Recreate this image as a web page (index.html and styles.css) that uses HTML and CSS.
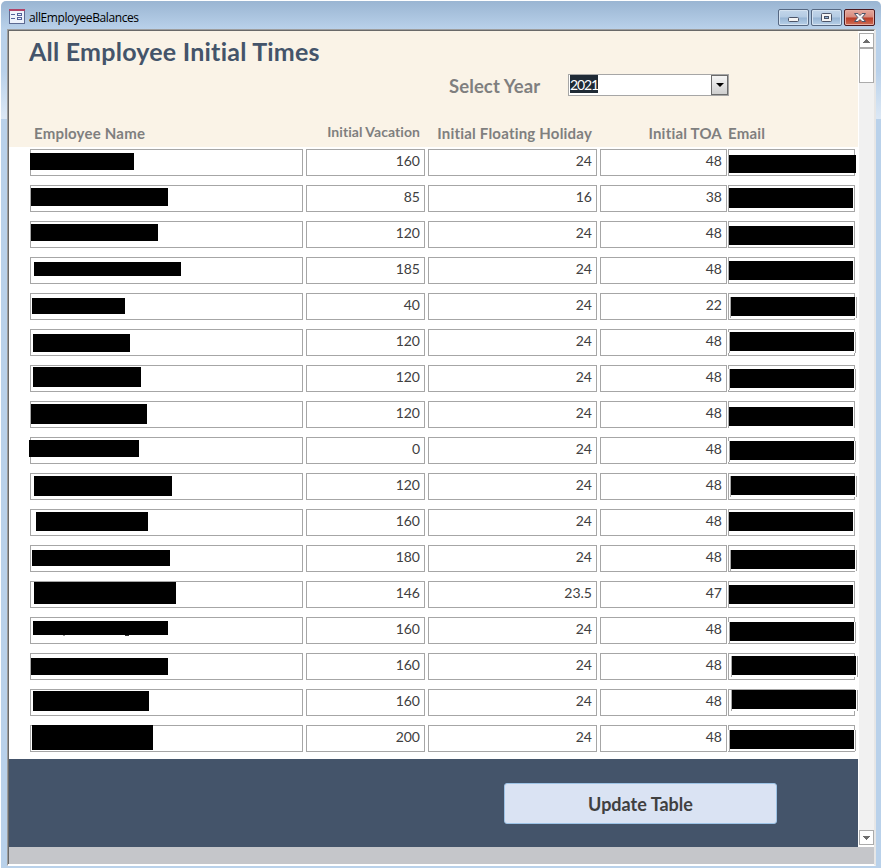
FILE: index.html
```
<!DOCTYPE html>
<html lang="en">
<head>
<meta charset="utf-8">
<title>allEmployeeBalances</title>
<link rel="stylesheet" href="styles.css">
</head>
<body>
<div class="window">
  <header class="titlebar">
    <svg class="app-icon" width="16" height="15" viewBox="0 0 16 15" shape-rendering="crispEdges">
      <rect width="16" height="15" fill="#5c6a92"/><rect x="1" y="2" width="14" height="12" fill="#eef3fc"/>
      <rect width="16" height="2" fill="#b04468"/>
      <path d="M2 5.500h4M2 9.500h4M8.500 4.500h4v2h-4zM8.500 8.500h4v2h-4z" fill="none" stroke="#53639b"/>
    </svg>
    <span class="window-name">allEmployeeBalances</span>
    <div class="controls">
      <button class="control" aria-label="Minimize"><svg width="29" height="15" viewBox="0 0 29 15"><rect x="9.5" y="7.5" width="10" height="4" rx="1" fill="#f4f4f4" stroke="#4c5468"/></svg></button>
      <button class="control" aria-label="Maximize"><svg width="29" height="15" viewBox="0 0 29 15"><rect x="9.5" y="3.5" width="10" height="8" rx="1" fill="#f4f4f4" stroke="#4c5468"/><rect x="12.5" y="6.5" width="4" height="2" fill="#8fb2d3" stroke="#4c5468"/></svg></button>
      <button class="control close" aria-label="Close"><svg width="29" height="15" viewBox="0 0 29 15"><path d="M9.500 3.500h3.500l2 2 2-2h3.500l-3.300 4 3.300 4h-3.500l-2-2-2 2h-3.500l3.300-4z" fill="#f4f4f4" stroke="#4c5468"/></svg></button>
    </div>
  </header>
  <div class="frame">
    <div class="work">
      <main class="form">
        <section class="form-header">
          <h1>All Employee Initial Times</h1>
          <div class="filter"><label>Select Year</label><div class="combo"><span class="selected">2021</span><span class="drop"></span></div></div>
          <div class="grid heads"><span class="h-name">Employee Name</span><span class="h-vac">Initial Vacation</span><span class="h-float">Initial Floating Holiday</span><span class="h-toa">Initial TOA</span><span class="h-email">Email</span></div>
        </section>
        <section class="rows">
          <div class="grid row"><div class="cell"><i class="mask" style="--x:0px;--y:4px;--w:104px;--h:17px"></i></div><div class="cell">160</div><div class="cell">24</div><div class="cell">48</div><div class="cell"><i class="mask" style="--x:1px;--y:6px;--w:127px;--h:18px"></i></div></div>
          <div class="grid row"><div class="cell"><i class="mask" style="--x:1px;--y:3px;--w:137px;--h:18px"></i></div><div class="cell">85</div><div class="cell">16</div><div class="cell">38</div><div class="cell"><i class="mask" style="--x:1px;--y:3px;--w:124px;--h:20px"></i></div></div>
          <div class="grid row"><div class="cell"><i class="mask" style="--x:1px;--y:3px;--w:127px;--h:17px"></i></div><div class="cell">120</div><div class="cell">24</div><div class="cell">48</div><div class="cell"><i class="patch" style="--x:0px;--y:5px"></i></div></div>
          <div class="grid row"><div class="cell"><i class="mask" style="--x:4px;--y:5px;--w:147px;--h:14px"></i></div><div class="cell">185</div><div class="cell">24</div><div class="cell">48</div><div class="cell"><i class="patch" style="--x:0px;--y:4px"></i></div></div>
          <div class="grid row"><div class="cell"><i class="mask" style="--x:2px;--y:5px;--w:93px;--h:16px"></i></div><div class="cell">40</div><div class="cell">24</div><div class="cell">22</div><div class="cell"><i class="patch" style="--x:2px;--y:4px"></i></div></div>
          <div class="grid row"><div class="cell"><i class="mask" style="--x:3px;--y:5px;--w:97px;--h:18px"></i></div><div class="cell">120</div><div class="cell">24</div><div class="cell">48</div><div class="cell"><i class="patch" style="--x:1px;--y:3px"></i></div></div>
          <div class="grid row"><div class="cell"><i class="mask" style="--x:3px;--y:2px;--w:108px;--h:20px"></i></div><div class="cell">120</div><div class="cell">24</div><div class="cell">48</div><div class="cell"><i class="patch" style="--x:1px;--y:4px"></i></div></div>
          <div class="grid row"><div class="cell"><i class="mask" style="--x:1px;--y:3px;--w:116px;--h:20px"></i></div><div class="cell">120</div><div class="cell">24</div><div class="cell">48</div><div class="cell"><i class="patch" style="--x:0px;--y:6px"></i></div></div>
          <div class="grid row"><div class="cell"><i class="mask" style="--x:-1px;--y:3px;--w:110px;--h:17px"></i></div><div class="cell">0</div><div class="cell">24</div><div class="cell">48</div><div class="cell"><i class="patch" style="--x:1px;--y:4px"></i></div></div>
          <div class="grid row"><div class="cell"><i class="mask" style="--x:4px;--y:3px;--w:138px;--h:20px"></i></div><div class="cell">120</div><div class="cell">24</div><div class="cell">48</div><div class="cell"><i class="patch" style="--x:2px;--y:3px"></i></div></div>
          <div class="grid row"><div class="cell"><i class="mask" style="--x:6px;--y:3px;--w:112px;--h:19px"></i></div><div class="cell">160</div><div class="cell">24</div><div class="cell">48</div><div class="cell"><i class="patch" style="--x:0px;--y:3px"></i></div></div>
          <div class="grid row"><div class="cell"><i class="mask" style="--x:2px;--y:5px;--w:138px;--h:16px"></i></div><div class="cell">180</div><div class="cell">24</div><div class="cell">48</div><div class="cell"><i class="patch" style="--x:2px;--y:5px"></i></div></div>
          <div class="grid row"><div class="cell"><i class="mask" style="--x:4px;--y:1px;--w:142px;--h:22px"></i></div><div class="cell">146</div><div class="cell">23.5</div><div class="cell">47</div><div class="cell"><i class="patch" style="--x:0px;--y:4px"></i></div></div>
          <div class="grid row"><div class="cell"><i class="mask descenders" style="--x:3px;--y:4px;--w:135px;--h:14px"></i></div><div class="cell">160</div><div class="cell">24</div><div class="cell">48</div><div class="cell"><i class="patch" style="--x:1px;--y:5px"></i></div></div>
          <div class="grid row"><div class="cell"><i class="mask" style="--x:1px;--y:5px;--w:137px;--h:17px"></i></div><div class="cell">160</div><div class="cell">24</div><div class="cell">48</div><div class="cell"><i class="patch" style="--x:3px;--y:3px"></i></div></div>
          <div class="grid row"><div class="cell"><i class="mask" style="--x:3px;--y:2px;--w:116px;--h:20px"></i></div><div class="cell">160</div><div class="cell">24</div><div class="cell">48</div><div class="cell"><i class="patch" style="--x:3px;--y:1px"></i></div></div>
          <div class="grid row"><div class="cell"><i class="mask" style="--x:2px;--y:0px;--w:121px;--h:25px"></i></div><div class="cell">200</div><div class="cell">24</div><div class="cell">48</div><div class="cell"><i class="patch" style="--x:1px;--y:5px"></i></div></div>
        </section>
        <footer class="form-footer"><button class="update">Update Table</button></footer>
      </main>
      <aside class="scrollbar">
        <span class="arrow"><svg width="7" height="4" viewBox="0 0 7 4" shape-rendering="crispEdges"><path d="M3 0h1v1h1v1h1v1h1v1H0V3h1V2h1V1h1z" fill="#6e6e6e"/></svg></span>
        <span class="thumb"></span>
        <span class="arrow down"><svg width="7" height="4" viewBox="0 0 7 4" shape-rendering="crispEdges"><path d="M0 0h7v1H6v1H5v1H4v1H3V3H2V2H1V1H0z" fill="#6e6e6e"/></svg></span>
      </aside>
    </div>
    <div class="status"></div>
  </div>
</div>
</body>
</html>
```
FILE: styles.css
```
* { box-sizing: border-box; }
body { margin: 0; background: #fff; font-family: Lato, sans-serif; }
button { font: inherit; padding: 0; margin: 0; }
.window {
  width: 880px; height: 867px; margin: 1px 0 0 1px; padding: 0 5px 2px 6px;
  border-radius: 5px 5px 0 0;
  background: linear-gradient(#9ab5d2 0, #b9d1ea 28px, #b9d1ea 70px, #dce8f5 118px, #b9d1ea 118px);
}
.titlebar { height: 28px; display: flex; align-items: flex-start; padding: 8px 1px 0 2px; }
.app-icon { display: block; }
.window-name { font: 12px/18px "Open Sans", sans-serif; letter-spacing: -.4px; margin-left: 4px; color: #000; }
.controls { margin-left: auto; display: flex; gap: 2px; }
.control {
  width: 31px; height: 17px; border: 1px solid #566882; border-radius: 2px;
  background: linear-gradient(#c3d6ea 0, #b4cbe3 48%, #96b4d3 52%, #b8d0e8 100%);
  box-shadow: inset 0 0 0 1px #d5e3f1;
}
.control svg { display: block; }
.control.close { border-color: #4d1a20; background: linear-gradient(#e5a89d 0, #d68a7c 48%, #b83a25 52%, #cf6f56 100%); box-shadow: inset 0 0 0 1px #e6aca0; }
.frame { height: 837px; border: 1px solid #9d9d9d; border-right: 2px solid #e6e6e6; border-bottom: 1px solid #fff; background: #fff; }
.work { display: flex; height: 817px; border-top: 1px solid #696969; border-left: 1px solid #696969; background: #fff; }
.form { width: 849px; display: flex; flex-direction: column; }
.form > * { flex: none; }
.form-header { height: 116px; background: #faf3e7; }
h1 { margin: 0 0 0 20px; font-size: 25px; letter-spacing: .23px; line-height: 41px; height: 42px; color: #44546a; white-space: nowrap; }
.filter { display: flex; height: 42px; padding-left: 440px; color: #7f7f7f; }
.filter label { width: 119px; font-size: 18.5px; letter-spacing: .1px; line-height: 27px; font-weight: 700; }
.combo { margin-top: 1px; width: 161px; height: 22px; border: 1px solid #a6a6a6; background: #fff; display: flex; padding-left: 1px; }
.selected { width: 28px; height: 18px; background: #1f2a35; color: #fff; font-size: 14px; line-height: 19px; letter-spacing: -1.1px; }
.drop { margin-left: auto; width: 17px; height: 20px; border: 1px solid #6b6b6b; background: linear-gradient(#f5f5f5, #cfcfcf); display: flex; justify-content: center; padding-top: 7px; }
.drop::before { content: ""; width: 0; height: 0; border: 4px solid transparent; border-top-color: #000; border-bottom: 0; }
.grid { display: grid; grid-template-columns: 273px 119px 169px 127px 127px; column-gap: 3px; padding-left: 21px; }
.grid > :last-child { margin-left: -2px; margin-right: 2px; }
.heads { font-weight: 700; font-size: 15px; letter-spacing: .2px; line-height: 36px; color: #7f7f7f; white-space: nowrap; text-align: right; }
.h-name { text-align: left; padding-left: 4px; }
.h-vac, .h-float, .h-toa { padding-right: 5px; }
.h-vac { font-size: 14px; letter-spacing: .05px; line-height: 34px; }
.h-email { text-align: left; }
.rows { height: 612px; padding-top: 2px; background: #fff; }
.row { height: 27px; margin-bottom: 9px; }
.cell { position: relative; border: 1px solid #a6a6a6; text-align: right; padding-right: 4px; font-size: 14px; line-height: 22px; color: #404040; }
.mask, .patch { position: absolute; left: calc(var(--x) - 1px); top: calc(var(--y) - 1px); }
.mask { width: var(--w); height: var(--h); background: #000; }
.patch { width: 127px; height: 21px; border: solid #a6a6a6; border-width: 0 1px; background: linear-gradient(#000, #000) 0 0 / 124px 19px no-repeat #fff; box-shadow: -1px 0 #fff; }
.descenders::before, .descenders::after { content: ""; position: absolute; top: 14px; left: 30px; width: 2px; height: 1px; background: #999; }
.descenders::after { left: 92px; width: 4px; background: #333; }
.form-footer { height: 88px; background: #44546a; padding: 24px 0 0 495px; }
.update { display: block; width: 273px; height: 41px; border: 1px solid #9dc3e6; border-radius: 3px; background: #dae3f3; color: #404040; font-size: 18px; font-weight: 700; }
.scrollbar { width: 15px; margin: 2px 0 2px 1px; background: #f1f1f1; display: flex; flex-direction: column; }
.arrow { height: 15px; border: 1px solid #ababab; background: #fff; display: flex; align-items: center; justify-content: center; }
.thumb { height: 35px; border: 1px solid #ababab; background: #fff; }
.down { margin-top: auto; }
.status { height: 17px; background: #c5c6ca; border-left: 1px solid #696969; }
```
